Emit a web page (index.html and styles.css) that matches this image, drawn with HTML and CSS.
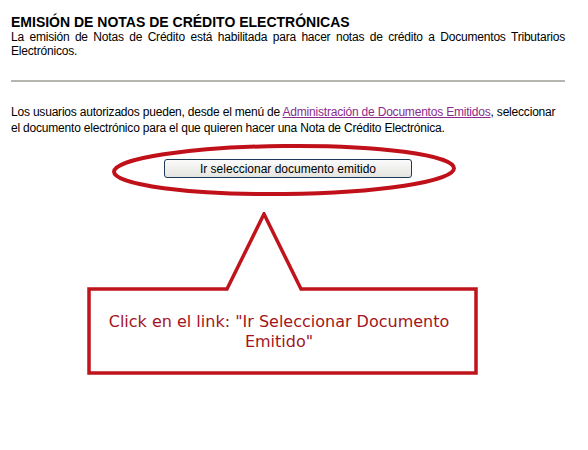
FILE: index.html
```html
<!DOCTYPE html>
<html lang="es">
<head>
    <meta charset="UTF-8">
    <title>Emisión de Notas de Crédito Electrónicas</title>
    <link rel="stylesheet" href="styles.css">
</head>
<body>
    <div class="page">
        <h1>EMISIÓN DE NOTAS DE CRÉDITO ELECTRÓNICAS</h1>
        <p class="intro">La emisión de Notas de Crédito está habilitada para hacer notas de crédito a Documentos Tributarios Electrónicos.</p>

        <hr class="divider">

        <p class="info">Los usuarios autorizados pueden, desde el menú de <a href="#">Administración de Documentos Emitidos</a>, seleccionar el documento electrónico para el que quieren hacer una Nota de Crédito Electrónica.</p>

        <div class="action">
            <button class="btn">Ir seleccionar documento emitido</button>
            <!-- marca roja alrededor del botón -->
            <svg class="ring" width="348" height="56" viewBox="0 0 348 56">
                <ellipse cx="173" cy="27" rx="170" ry="24" fill="none" stroke="#c0101a" stroke-width="4" transform="rotate(-0.6 173 27)"/>
            </svg>
        </div>

        <div class="callout">
            <svg class="callout-shape" width="392" height="165" viewBox="0 0 392 165">
                <polygon points="2,77 140,77 177,2 214,77 389,77 389,161 2,161" fill="none" stroke="#c0141c" stroke-width="3.5" stroke-linejoin="miter"/>
            </svg>
            <p class="callout-text">Click en el link: "Ir Seleccionar Documento Emitido"</p>
        </div>
    </div>
</body>
</html>
```

FILE: styles.css
```css
body {
    margin: 0;
    padding: 0;
    background: #fff;
    color: #000;
    font-family: "Liberation Sans", Arial, sans-serif;
    font-size: 12px;
}
.page {
    padding: 14px 23px 0 11px;
}
h1 {
    margin: 0;
    font-size: 14px;
    font-weight: bold;
    line-height: 16px;
}
.intro {
    margin: 0;
    line-height: 14px;
    text-align: justify;
    letter-spacing: -0.2px;
}
.divider {
    margin: 22px 0 0 0;
    border: none;
    height: 2px;
    background: #b5b5ad;
}
.info {
    margin: 22px 0 0 0;
    width: 546px;
    line-height: 16px;
    letter-spacing: -0.2px;
}
.info a {
    color: #8b2a8b;
}
.action {
    position: relative;
    margin: 23px 0 0 153px;
    width: 248px;
}
.btn {
    display: block;
    width: 248px;
    height: 19px;
    padding: 0;
    border: 1px solid #1e3a5a;
    border-radius: 3px;
    background: linear-gradient(#fbfbfb, #e4e4e0);
    font-family: "Liberation Sans", Arial, sans-serif;
    font-size: 12px;
    color: #000;
}
.ring {
    position: absolute;
    left: -53px;
    top: -16px;
}
.callout {
    position: relative;
    margin: 34px 0 0 76px;
    width: 392px;
    height: 165px;
}
.callout-shape {
    position: absolute;
    left: 0;
    top: 0;
}
.callout-text {
    position: relative;
    margin: 0;
    padding: 100px 24px 0 16px;
    font-family: "DejaVu Sans", Verdana, sans-serif;
    font-size: 16px;
    line-height: 20px;
    color: #a3141c;
    text-align: center;
}
```
